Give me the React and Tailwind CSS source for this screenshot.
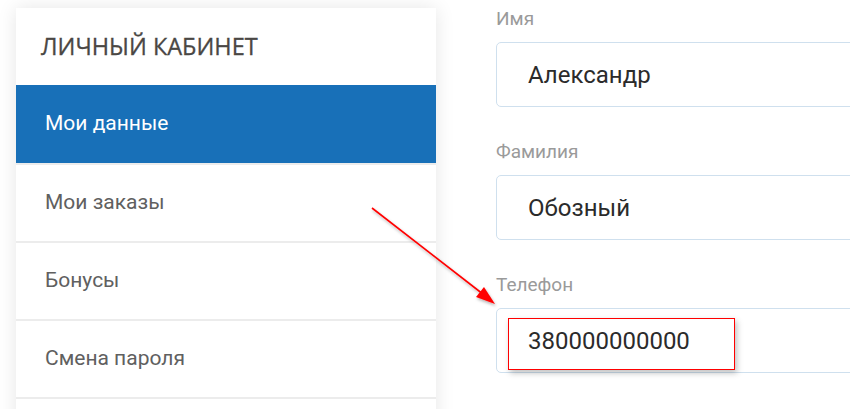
import React from "react";

const items = ["Мои заказы", "Бонусы", "Смена пароля", ""];

function Field({ label, value, highlight }) {
  return (
    <div className="flex flex-col shrink-0">
      <div className="h-[24px] mb-[11px] text-[19px] leading-[24px] text-[#9a9a9a]">{label}</div>
      <div className="relative h-[65px] w-[420px] rounded-[5px] border border-[#cfe0ee] bg-white flex items-center pl-[31px] text-[24px] text-[#2b2b2b]">
        {highlight && (
          <div className="absolute left-[11px] top-[9px] w-[227px] h-[52px] border border-[#ff0000] shadow-[2px_3px_6px_rgba(0,0,0,0.25)]" />
        )}
        <span className="relative">{value}</span>
      </div>
    </div>
  );
}

export default function App() {
  return (
    <div
      className="relative w-[850px] h-[409px] overflow-hidden bg-white flex items-start pl-[16px] pt-[8px]"
      style={{ fontFamily: "Roboto, 'Noto Sans', sans-serif" }}
    >
      <div className="w-[420px] shrink-0 bg-white shadow-[0_0_18px_rgba(0,0,0,0.10)] flex flex-col">
        <div className="h-[77px] shrink-0 flex items-center pl-[25px] pt-[1px] text-[23.5px] text-[#4a4744] uppercase [-webkit-text-stroke:0.3px_#4a4744]" style={{ fontFamily: "'Open Sans', sans-serif" }}>
          Личный кабинет
        </div>
        <div className="h-[78px] shrink-0 bg-[#1870b8] flex items-center pl-[29px] text-[21px] text-white">
          Мои данные
        </div>
        {items.map((t, i) => (
          <div key={i} className="h-[78px] shrink-0 border-t-2 border-[#ececec] first:border-t-0 flex items-center pl-[29px] text-[21px] text-[#606060]">
            {t}
          </div>
        ))}
      </div>
      <div className="ml-[60px] flex flex-col gap-[33px] -mt-[1px]">
        <Field label="Имя" value="Александр" />
        <Field label="Фамилия" value="Обозный" />
        <Field label="Телефон" value="380000000000" highlight />
      </div>
      <svg className="absolute left-0 top-0 pointer-events-none" width="850" height="409">
        <defs>
          <filter id="sh" x="-20%" y="-20%" width="140%" height="140%">
            <feDropShadow dx="1" dy="2" stdDeviation="1.5" floodColor="#000" floodOpacity="0.3" />
          </filter>
        </defs>
        <g filter="url(#sh)">
          <line x1="372" y1="208" x2="488" y2="298" stroke="#ff0000" strokeWidth="1.6" />
          <polygon points="495,304 476,297 484,287" fill="#ff0000" />
        </g>
      </svg>
    </div>
  );
}
